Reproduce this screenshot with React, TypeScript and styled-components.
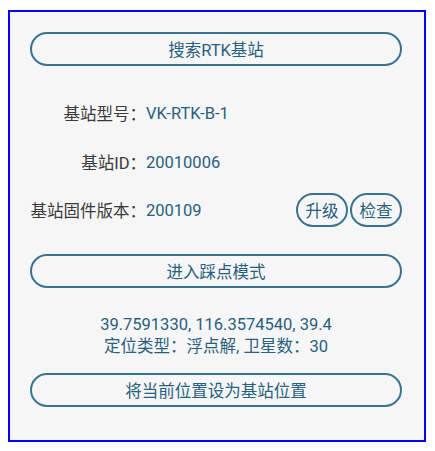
import React from 'react';
import styled, { createGlobalStyle } from 'styled-components';

const GlobalStyle = createGlobalStyle`
  html, body {
    margin: 0;
    padding: 0;
    background: #ffffff;
  }
  body {
    font-family: Roboto, "Noto Sans CJK SC", sans-serif;
  }
`;

const TEAL = '#28607f';
const LINE = '#3a7390';

function App() {
  const rows = [
    { label: '基站型号：', value: 'VK-RTK-B-1' },
    { label: '基站ID：', value: '20010006' }
  ];

  return (
    <>
      <GlobalStyle />
      <Frame>
        <WideBtn $top={20}>搜索RTK基站</WideBtn>

        {rows.map((row, i) => (
          <InfoRow key={row.label} $top={i === 0 ? 30 : 15}>
            <Label>{row.label}</Label>
            <Value>{row.value}</Value>
          </InfoRow>
        ))}

        <InfoRow $top={14}>
          <Label>基站固件版本：</Label>
          <Value>200109</Value>
          <SmallBtns>
            <SmallBtn>升级</SmallBtn>
            <SmallBtn>检查</SmallBtn>
          </SmallBtns>
        </InfoRow>

        <WideBtn $top={27}>进入踩点模式</WideBtn>

        <Position>
          <div>39.7591330, 116.3574540, 39.4</div>
          <div>定位类型：浮点解, 卫星数：30</div>
        </Position>

        <WideBtn $top={15}>将当前位置设为基站位置</WideBtn>
      </Frame>
    </>
  );
}

export default App;

const Frame = styled.div`
  box-sizing: border-box;
  width: 418px;
  height: 432px;
  margin: 10px 0 0 8px;
  border: 2px solid #0000ff;
  background: #f6f6f6;
  padding: 0 22px 0 20px;
  display: flex;
  flex-direction: column;
`;

const WideBtn = styled.button<{ $top: number }>`
  box-sizing: border-box;
  margin-top: ${(p) => p.$top}px;
  width: 100%;
  height: 34px;
  border: 2px solid ${LINE};
  border-radius: 17px;
  background: transparent;
  color: ${TEAL};
  font-family: Roboto, "Noto Sans CJK SC", sans-serif;
  font-size: 16.5px;
  padding: 0;
  cursor: pointer;
`;

const InfoRow = styled.div<{ $top: number }>`
  margin-top: ${(p) => p.$top}px;
  height: 34px;
  display: flex;
  align-items: center;
  font-size: 16.5px;
`;

const Label = styled.span`
  width: 116px;
  flex-shrink: 0;
  text-align: right;
  color: #3a3a3a;
  white-space: nowrap;
`;

const Value = styled.span`
  color: ${TEAL};
  flex: 1;
`;

const SmallBtns = styled.div`
  display: flex;
  gap: 2px;
`;

const SmallBtn = styled.button`
  box-sizing: border-box;
  width: 52px;
  height: 34px;
  border: 2px solid ${LINE};
  border-radius: 17px;
  background: transparent;
  color: ${TEAL};
  font-family: Roboto, "Noto Sans CJK SC", sans-serif;
  font-size: 16.5px;
  padding: 0;
  cursor: pointer;
`;

const Position = styled.div`
  margin-top: 26px;
  text-align: center;
  color: ${TEAL};
  font-size: 16.5px;
  line-height: 22px;
`;
